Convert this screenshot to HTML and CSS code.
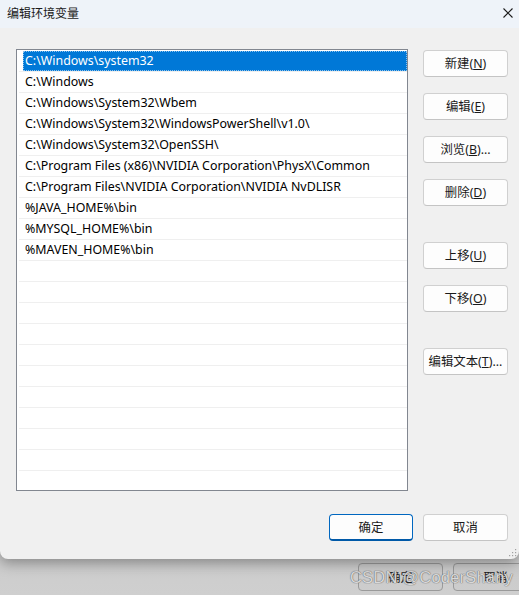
FILE: index.html
```html
<!DOCTYPE html>
<html lang="zh-CN">
<head>
<meta charset="utf-8">
<title>编辑环境变量</title>
<link rel="stylesheet" href="styles.css">
</head>
<body>
<div class="screen">
  <div class="window">
    <div class="titlebar">
      <span class="title">编辑环境变量</span>
      <svg class="close" width="10" height="10" viewBox="0 0 10 10"><path d="M0.5 0.5 L9.5 9.5 M9.5 0.5 L0.5 9.5" stroke="#1b1b1b" stroke-width="1.1" fill="none"/></svg>
    </div>
    <div class="content">
      <div class="listbox">
        <div class="row"><span class="cell selected">C:\Windows\system32</span></div>
        <div class="row"><span class="cell">C:\Windows</span></div>
        <div class="row"><span class="cell">C:\Windows\System32\Wbem</span></div>
        <div class="row"><span class="cell">C:\Windows\System32\WindowsPowerShell\v1.0\</span></div>
        <div class="row"><span class="cell">C:\Windows\System32\OpenSSH\</span></div>
        <div class="row"><span class="cell">C:\Program Files (x86)\NVIDIA Corporation\PhysX\Common</span></div>
        <div class="row"><span class="cell">C:\Program Files\NVIDIA Corporation\NVIDIA NvDLISR</span></div>
        <div class="row"><span class="cell">%JAVA_HOME%\bin</span></div>
        <div class="row"><span class="cell">%MYSQL_HOME%\bin</span></div>
        <div class="row"><span class="cell">%MAVEN_HOME%\bin</span></div>
        <div class="row"><span class="cell"></span></div>
        <div class="row"><span class="cell"></span></div>
        <div class="row"><span class="cell"></span></div>
        <div class="row"><span class="cell"></span></div>
        <div class="row"><span class="cell"></span></div>
        <div class="row"><span class="cell"></span></div>
        <div class="row"><span class="cell"></span></div>
        <div class="row"><span class="cell"></span></div>
        <div class="row"><span class="cell"></span></div>
        <div class="row"><span class="cell"></span></div>
        <div class="row"><span class="cell"></span></div>
        <div class="row"><span class="cell"></span></div>
      </div>
      <div class="side">
        <button class="btn">新建(<u>N</u>)</button>
        <button class="btn">编辑(<u>E</u>)</button>
        <button class="btn">浏览(<u>B</u>)...</button>
        <button class="btn">删除(<u>D</u>)</button>
        <button class="btn spaced">上移(<u>U</u>)</button>
        <button class="btn">下移(<u>O</u>)</button>
        <button class="btn spaced">编辑文本(<u>T</u>)...</button>
      </div>
    </div>
    <div class="footer">
      <button class="btn primary">确定</button>
      <button class="btn cancel">取消</button>
    </div>
    <svg class="grip" width="8" height="8" viewBox="0 0 8 8">
      <rect x="6" y="0" width="1.2" height="1.2" fill="#a0a0a0"/>
      <rect x="3" y="3" width="1.2" height="1.2" fill="#a0a0a0"/>
      <rect x="6" y="3" width="1.2" height="1.2" fill="#a0a0a0"/>
      <rect x="0" y="6" width="1.2" height="1.2" fill="#a0a0a0"/>
      <rect x="3" y="6" width="1.2" height="1.2" fill="#a0a0a0"/>
      <rect x="6" y="6" width="1.2" height="1.2" fill="#a0a0a0"/>
    </svg>
  </div>
  <div class="behind">
    <div class="ghost">确定</div>
    <div class="ghost">取消</div>
    <span class="watermark">CSDN @CoderShany</span>
  </div>
</div>
</body>
</html>
```
FILE: styles.css
```css
html, body {
  margin: 0;
  padding: 0;
}
body {
  width: 519px;
  height: 595px;
  overflow: hidden;
  font-family: "Noto Sans", "Noto Sans CJK SC", sans-serif;
  font-size: 12.4px;
  color: #1a1a1a;
  background: linear-gradient(#a4a4a4, #cfcfcf);
}
.screen {
  width: 519px;
  height: 595px;
  display: flex;
  flex-direction: column;
}
.window {
  position: relative;
  height: 559px;
  box-sizing: border-box;
  background: #f0f0f0;
  border-radius: 0 0 8px 8px;
  box-shadow: 0 4px 14px rgba(0,0,0,0.35);
  z-index: 1;
  display: flex;
  flex-direction: column;
}
.titlebar {
  height: 28px;
  flex: none;
  background: #eef3f9;
  display: flex;
  align-items: center;
  justify-content: space-between;
  padding: 0 6px 0 7px;
}
.title {
  font-size: 12px;
  font-family: "Noto Sans CJK SC", sans-serif;
  color: #1a1a1a;
  line-height: 14px;
  margin-top: -2px;
}
.close {
  display: block;
  margin-top: -2px;
}
.content {
  display: flex;
  padding: 21px 0 0 16px;
}
.listbox {
  width: 392px;
  height: 442px;
  box-sizing: border-box;
  border: 1px solid #828790;
  background: #ffffff;
  padding: 1px 0 0 1px;
  overflow: hidden;
  flex: none;
}
.row {
  height: 20px;
  border-bottom: 1px solid #efefef;
  margin-left: 1px;
  width: 388px;
  display: flex;
}
.cell {
  flex: 1;
  margin-left: 4px;
  padding-left: 2px;
  height: 20px;
  line-height: 20px;
  white-space: nowrap;
  color: #000;
}
.cell.selected {
  background: #0078d7;
  color: #ffffff;
  outline: 1px dotted rgba(255,255,255,0.55);
  outline-offset: -1px;
}
.side {
  display: flex;
  flex-direction: column;
  gap: 16px;
  margin-left: 15px;
  padding-top: 1px;
}
.btn {
  width: 85px;
  height: 27px;
  box-sizing: border-box;
  border: 1px solid #d0d0d0;
  border-bottom-color: #c4c4c4;
  border-radius: 4px;
  background: #fdfdfd;
  font-family: "Noto Sans", "Noto Sans CJK SC", sans-serif;
  font-size: 12.4px;
  color: #1a1a1a;
  padding: 0;
  line-height: 25px;
  text-align: center;
}
.btn u {
  text-underline-offset: 1px;
}
.spaced {
  margin-top: 20px;
}
.footer {
  display: flex;
  justify-content: flex-end;
  gap: 10px;
  padding: 23px 11px 0 0;
}
.primary {
  width: 84px;
  border: 1px solid #0067c0;
  border-bottom: 2px solid #0059a8;
}
.grip {
  position: absolute;
  right: 2px;
  bottom: 2px;
}
.behind {
  position: relative;
  display: flex;
  gap: 10px;
  padding: 4px 0 0 358px;
  overflow: hidden;
}
.ghost {
  flex: none;
  width: 85px;
  height: 28px;
  box-sizing: border-box;
  border: 1px solid #9a9a9a;
  border-radius: 4px;
  background: rgba(200,200,200,0.25);
  font-family: "Noto Sans CJK SC", sans-serif;
  font-size: 12px;
  line-height: 26px;
  text-align: center;
  color: #1a1a1a;
}
.watermark {
  position: absolute;
  left: 350px;
  top: 9px;
  font-family: "Liberation Sans", sans-serif;
  font-size: 16.5px;
  color: rgba(255,255,255,0.75);
  text-shadow: 0 0 1px #666, 0 0 1px #666;
  white-space: nowrap;
  letter-spacing: 0.2px;
}
```
